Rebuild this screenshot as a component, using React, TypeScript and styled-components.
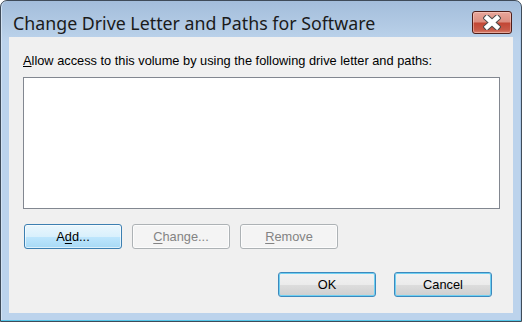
import { ReactElement } from "react";
import styled, { createGlobalStyle } from "styled-components";

const GlobalStyle = createGlobalStyle`
  html, body {
    margin: 0;
    padding: 0;
    background: #ffffff;
  }
`;

const Window = styled.div`
  box-sizing: border-box;
  width: 522px;
  height: 322px;
  border: 1px solid #3f4b59;
  border-radius: 7px 7px 0 0;
  padding: 0 8px 8px;
  display: flex;
  flex-direction: column;
  background: linear-gradient(
    to bottom,
    #a3bddb 0px,
    #b2cae4 24px,
    #bcd3ec 40px,
    #bcd3ec 100%
  );
  box-shadow: inset 0 -1px 0 #55c6e8, inset -1px 0 0 #a9c6e6,
    inset 1px 0 0 #d2e2f3;
`;

const TitleBar = styled.div`
  height: 36px;
  display: flex;
  align-items: flex-start;
  justify-content: space-between;
`;

const Title = styled.div`
  margin: 12px 0 0 4px;
  font-family: "Noto Sans", "Open Sans", sans-serif;
  font-size: 17.8px;
  line-height: 20px;
  color: #1b1b1b;
  white-space: nowrap;
`;

const CloseButton = styled.button`
  box-sizing: border-box;
  margin: 10px 1px 0 0;
  width: 40px;
  height: 23px;
  padding: 0;
  border: 1px solid #4f1e19;
  border-radius: 3px;
  display: flex;
  align-items: center;
  justify-content: center;
  background: linear-gradient(
    to bottom,
    #e8a79b 0%,
    #dc8e80 48%,
    #c24634 52%,
    #c85a48 85%,
    #d8826f 100%
  );
  box-shadow: inset 0 0 0 1px rgba(255, 220, 210, 0.45);
`;

const Client = styled.div`
  flex: 1;
  background: #f0f0f0;
  padding: 17px 13px 16px 14px;
  display: flex;
  flex-direction: column;
  font-family: "Liberation Sans", Arial, sans-serif;
  font-size: 12.8px;
  color: #000;
`;

const Label = styled.div`
  line-height: 14px;
  white-space: nowrap;
`;

const ListBox = styled.div`
  box-sizing: border-box;
  margin-top: 9px;
  height: 132px;
  background: #ffffff;
  border: 1px solid #828790;
`;

const Row = styled.div<{ $end?: boolean }>`
  display: flex;
  gap: ${({ $end }) => ($end ? "18px" : "10px")};
  justify-content: ${({ $end }) => ($end ? "flex-end" : "flex-start")};
  margin-top: ${({ $end }) => ($end ? "23px" : "15px")};
  padding: ${({ $end }) => ($end ? "0 8px 0 0" : "0 0 0 1px")};
`;

type Variant = "hot" | "default" | "disabled";

const Button = styled.button<{ $variant: Variant }>`
  box-sizing: border-box;
  width: 98px;
  height: 25px;
  padding: 0;
  border-radius: 3px;
  font-family: "Liberation Sans", Arial, sans-serif;
  font-size: 12.8px;
  line-height: 24px;
  text-align: center;
  border: 1px solid
    ${({ $variant }) =>
      $variant === "hot"
        ? "#3c7fb1"
        : $variant === "default"
        ? "#3d89bd"
        : "#adb2b5"};
  color: ${({ $variant }) => ($variant === "disabled" ? "#838383" : "#000")};
  background: ${({ $variant }) =>
    $variant === "hot"
      ? "linear-gradient(to bottom, #eaf6fd 0%, #d9f0fc 50%, #bee6fd 51%, #a7d9f5 100%)"
      : $variant === "default"
      ? "linear-gradient(to bottom, #f2f2f2 0%, #ebebeb 50%, #dddddd 51%, #cfcfcf 100%)"
      : "#f4f4f4"};
  box-shadow: ${({ $variant }) =>
    $variant === "hot"
      ? "inset 0 0 0 1px rgba(255,255,255,0.6)"
      : $variant === "default"
      ? "inset 0 0 0 1px #6fd0f2"
      : "inset 0 0 0 1px #fcfcfc"};

  u {
    text-decoration: underline;
    text-underline-offset: 2px;
  }
`;

const CloseIcon = (): ReactElement => (
  <svg width="18" height="15" viewBox="0 0 18 15">
    <path
      d="M4 3 L14 12 M14 3 L4 12"
      stroke="#4a4a4a"
      strokeWidth="6.5"
      strokeLinecap="square"
    />
    <path
      d="M4 3 L14 12 M14 3 L4 12"
      stroke="#ffffff"
      strokeWidth="4.5"
      strokeLinecap="square"
    />
  </svg>
);

const App = (): ReactElement => {
  return (
    <>
      <GlobalStyle />
      <Window>
        <TitleBar>
          <Title>Change Drive Letter and Paths for Software</Title>
          <CloseButton aria-label="Close">
            <CloseIcon />
          </CloseButton>
        </TitleBar>
        <Client>
          <Label>
            <u>A</u>llow access to this volume by using the following drive
            letter and paths:
          </Label>
          <ListBox />
          <Row>
            <Button $variant="hot">
              A<u>d</u>d...
            </Button>
            <Button $variant="disabled" disabled>
              <u>C</u>hange...
            </Button>
            <Button $variant="disabled" disabled>
              <u>R</u>emove
            </Button>
          </Row>
          <Row $end>
            <Button $variant="default">OK</Button>
            <Button $variant="default">Cancel</Button>
          </Row>
        </Client>
      </Window>
    </>
  );
};

export default App;
